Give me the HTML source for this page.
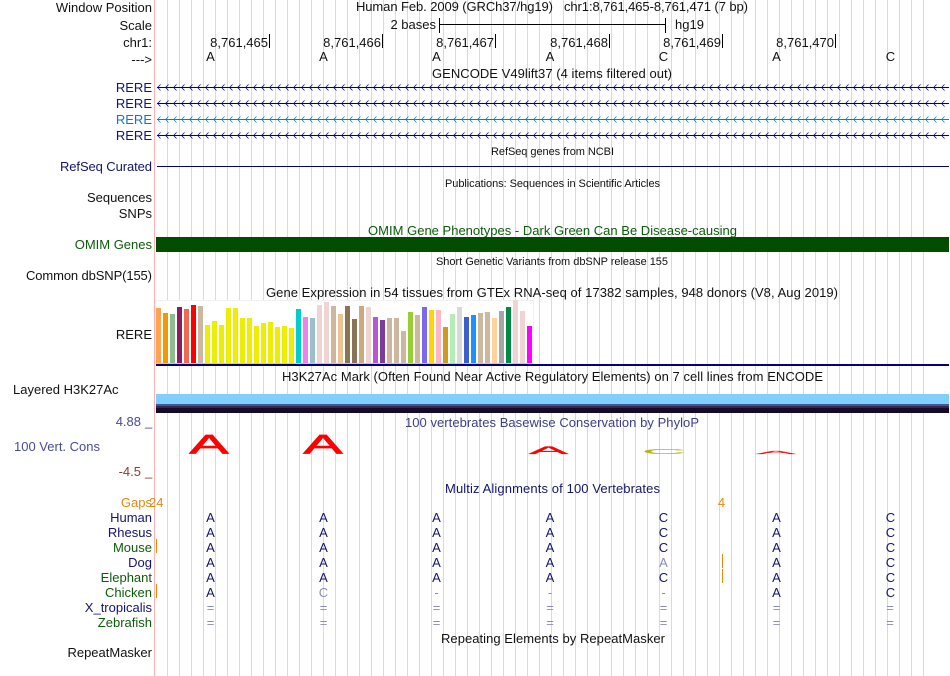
<!DOCTYPE html>
<html><head><meta charset="utf-8"><title>Genome Browser</title>
<style>
html,body{margin:0;padding:0;background:#fff;width:950px;height:676px;overflow:hidden}
svg{display:block;font-family:"Liberation Sans",sans-serif;font-size:13px}
.e{text-anchor:end}.m{text-anchor:middle}.s{font-size:11px}
.n{fill:#14146e}.g{fill:#0b5c0b}.k{fill:#111}.l{fill:#8a8abb}
</style></head><body>
<svg width="950" height="676" viewBox="0 0 950 676" xmlns="http://www.w3.org/2000/svg">
<defs>
<pattern id="ar1" patternUnits="userSpaceOnUse" x="157" y="84" width="8" height="7"><path d="M3.5 .5L.6 3.5L3.5 6.5" fill="none" stroke="#000080" stroke-width=".75"/></pattern>
<pattern id="ar2" patternUnits="userSpaceOnUse" x="157" y="100" width="8" height="7"><path d="M3.5 .5L.6 3.5L3.5 6.5" fill="none" stroke="#000080" stroke-width=".75"/></pattern>
<pattern id="ar3" patternUnits="userSpaceOnUse" x="157" y="116" width="8" height="7"><path d="M3.5 .5L.6 3.5L3.5 6.5" fill="none" stroke="#1378b6" stroke-width=".75"/></pattern>
<pattern id="ar4" patternUnits="userSpaceOnUse" x="157" y="132" width="8" height="7"><path d="M3.5 .5L.6 3.5L3.5 6.5" fill="none" stroke="#000080" stroke-width=".75"/></pattern>
</defs>
<g shape-rendering="crispEdges">
<path fill="none" stroke="#dad6f2" stroke-width="1" d="M167.5 0v676m12-676v676m12-676v676m12-676v676m12-676v676m12-676v676m12-676v676m12-676v676m12-676v676m12-676v676m12-676v676m12-676v676m12-676v676m12-676v676m12-676v676m12-676v676m12-676v676m12-676v676m12-676v676m12-676v676m12-676v676m12-676v676m12-676v676m12-676v676m12-676v676m12-676v676m12-676v676m12-676v676m12-676v676m12-676v676m12-676v676m12-676v676m12-676v676m12-676v676m12-676v676m12-676v676m12-676v676m12-676v676m12-676v676m12-676v676m12-676v676m12-676v676m12-676v676m12-676v676m12-676v676m12-676v676m12-676v676m12-676v676m12-676v676m12-676v676m12-676v676m12-676v676m12-676v676m12-676v676m12-676v676m12-676v676m12-676v676m12-676v676m12-676v676m12-676v676m12-676v676m12-676v676m12-676v676m12-676v676"/>
<rect x="154" y="0" width="1" height="676" fill="#ffb2b2"/>
</g>

<!-- header -->
<g class="k">
<text class="e" x="152" y="12">Window Position</text>
<text class="e" x="152" y="30">Scale</text>
<text class="e" x="152" y="47">chr1:</text>
<text class="e" x="152" y="64">---&gt;</text>
<text x="356" y="11" textLength="197">Human Feb. 2009 (GRCh37/hg19)</text>
<text x="564" y="11" textLength="184">chr1:8,761,465-8,761,471 (7 bp)</text>
<text class="e" x="436" y="29">2 bases</text>
<text x="675" y="29">hg19</text>
<text class="e" x="268" y="47">8,761,465</text>
<text class="e" x="381" y="47">8,761,466</text>
<text class="e" x="494" y="47">8,761,467</text>
<text class="e" x="608" y="47">8,761,468</text>
<text class="e" x="721" y="47">8,761,469</text>
<text class="e" x="834" y="47">8,761,470</text>
<text class="m" x="210.5" y="61">A</text>
<text class="m" x="323.5" y="61">A</text>
<text class="m" x="436.5" y="61">A</text>
<text class="m" x="550" y="61">A</text>
<text class="m" x="663.5" y="61">C</text>
<text class="m" x="776.5" y="61">A</text>
<text class="m" x="890.5" y="61">C</text>
<text x="432" y="78" textLength="240">GENCODE V49lift37 (4 items filtered out)</text>
</g>
<g shape-rendering="crispEdges" fill="#000">
<rect x="439" y="24" width="227" height="1"/>
<rect x="439" y="18" width="1" height="15"/>
<rect x="665" y="18" width="1" height="15"/>
<rect x="269" y="34" width="1" height="14"/>
<rect x="382" y="34" width="1" height="14"/>
<rect x="495" y="34" width="1" height="14"/>
<rect x="609" y="34" width="1" height="14"/>
<rect x="722" y="34" width="1" height="14"/>
<rect x="835" y="34" width="1" height="14"/>
</g>

<!-- RERE -->
<text class="e n" x="152" y="92">RERE</text>
<text class="e n" x="152" y="108">RERE</text>
<text class="e" x="152" y="124" fill="#1378b6">RERE</text>
<text class="e n" x="152" y="140">RERE</text>
<rect x="157" y="84" width="792" height="7" fill="url(#ar1)"/>
<rect x="157" y="100" width="792" height="7" fill="url(#ar2)"/>
<rect x="157" y="116" width="792" height="7" fill="url(#ar3)"/>
<rect x="157" y="132" width="792" height="7" fill="url(#ar4)"/>
<g shape-rendering="crispEdges">
<rect x="157" y="87" width="792" height="1" fill="#000080"/>
<rect x="157" y="103" width="792" height="1" fill="#000080"/>
<rect x="157" y="119" width="792" height="1" fill="#1378b6"/>
<rect x="157" y="135" width="792" height="1" fill="#000080"/>
<rect x="157" y="166" width="792" height="1" fill="#000080"/>
</g>
<text class="s k" x="491" y="155" textLength="123">RefSeq genes from NCBI</text>
<text class="n" x="60" y="171" textLength="92">RefSeq Curated</text>
<text class="s k" x="445" y="187" textLength="215">Publications: Sequences in Scientific Articles</text>
<text class="e k" x="152" y="202">Sequences</text>
<text class="e k" x="152" y="218">SNPs</text>
<text class="g" x="368" y="235" textLength="369">OMIM Gene Phenotypes - Dark Green Can Be Disease-causing</text>
<text class="e g" x="152" y="249">OMIM Genes</text>
<rect x="156" y="237" width="793" height="15" fill="#004d00" shape-rendering="crispEdges"/>
<text class="s k" x="436" y="265" textLength="232">Short Genetic Variants from dbSNP release 155</text>
<text class="k" x="26" y="280" textLength="126">Common dbSNP(155)</text>
<text class="k" x="266" y="297" textLength="572">Gene Expression in 54 tissues from GTEx RNA-seq of 17382 samples, 948 donors (V8, Aug 2019)</text>
<text class="e k" x="152" y="339">RERE</text>

<!-- GTEx bars -->
<g shape-rendering="crispEdges">
<rect x="155" y="300" width="379" height="64" fill="#f1f1f4"/>
<rect x="156" y="301" width="377" height="62" fill="#fff"/>
<rect x="156" y="363" width="377" height="1" fill="#c8c8c8"/>
<rect x="156" y="308" width="5" height="55" fill="#FFA54F"/>
<rect x="163" y="313" width="5" height="50" fill="#EE9A00"/>
<rect x="170" y="314" width="5" height="49" fill="#8FBC8F"/>
<rect x="177" y="307" width="5" height="56" fill="#8B1C62"/>
<rect x="184" y="309" width="5" height="54" fill="#EE6A50"/>
<rect x="191" y="305" width="5" height="58" fill="#FF0000"/>
<rect x="198" y="306" width="5" height="57" fill="#CDB79E"/>
<rect x="205" y="325" width="5" height="38" fill="#EEEE00"/>
<rect x="212" y="321" width="5" height="42" fill="#EEEE00"/>
<rect x="219" y="325" width="5" height="38" fill="#EEEE00"/>
<rect x="226" y="308" width="5" height="55" fill="#EEEE00"/>
<rect x="233" y="308" width="5" height="55" fill="#EEEE00"/>
<rect x="240" y="318" width="5" height="45" fill="#EEEE00"/>
<rect x="247" y="318" width="5" height="45" fill="#EEEE00"/>
<rect x="254" y="326" width="5" height="37" fill="#EEEE00"/>
<rect x="261" y="323" width="5" height="40" fill="#EEEE00"/>
<rect x="268" y="322" width="5" height="41" fill="#EEEE00"/>
<rect x="275" y="327" width="5" height="36" fill="#EEEE00"/>
<rect x="282" y="326" width="5" height="37" fill="#EEEE00"/>
<rect x="289" y="328" width="5" height="35" fill="#EEEE00"/>
<rect x="296" y="309" width="5" height="54" fill="#00CDCD"/>
<rect x="303" y="317" width="5" height="46" fill="#EE82EE"/>
<rect x="310" y="318" width="5" height="45" fill="#9AC0CD"/>
<rect x="317" y="305" width="5" height="58" fill="#EED5D2"/>
<rect x="324" y="302" width="5" height="61" fill="#EED5D2"/>
<rect x="331" y="306" width="5" height="57" fill="#CDB79E"/>
<rect x="338" y="314" width="5" height="49" fill="#EEC591"/>
<rect x="345" y="306" width="5" height="57" fill="#8B7355"/>
<rect x="352" y="319" width="5" height="44" fill="#8B7355"/>
<rect x="359" y="306" width="5" height="57" fill="#CDAA7D"/>
<rect x="366" y="307" width="5" height="56" fill="#EED5D2"/>
<rect x="373" y="317" width="5" height="46" fill="#BA55D3"/>
<rect x="380" y="320" width="5" height="43" fill="#7D3C98"/>
<rect x="387" y="318" width="5" height="45" fill="#CDB79E"/>
<rect x="394" y="318" width="5" height="45" fill="#CDB79E"/>
<rect x="401" y="331" width="5" height="32" fill="#CDB79E"/>
<rect x="408" y="312" width="5" height="51" fill="#9ACD32"/>
<rect x="415" y="315" width="5" height="48" fill="#CDB79E"/>
<rect x="422" y="307" width="5" height="56" fill="#7B68EE"/>
<rect x="429" y="310" width="5" height="53" fill="#FFD700"/>
<rect x="436" y="310" width="5" height="53" fill="#FFB6C1"/>
<rect x="443" y="327" width="5" height="36" fill="#CD9B1D"/>
<rect x="450" y="314" width="5" height="49" fill="#B4EEB4"/>
<rect x="457" y="307" width="5" height="56" fill="#D9D9D9"/>
<rect x="464" y="317" width="5" height="46" fill="#3A5FCD"/>
<rect x="471" y="315" width="5" height="48" fill="#1E90FF"/>
<rect x="478" y="313" width="5" height="50" fill="#CDB79E"/>
<rect x="485" y="312" width="5" height="51" fill="#CDB79E"/>
<rect x="492" y="318" width="5" height="45" fill="#FFD39B"/>
<rect x="499" y="311" width="5" height="52" fill="#A6A6A6"/>
<rect x="506" y="307" width="5" height="56" fill="#008B45"/>
<rect x="513" y="300" width="5" height="63" fill="#EED5D2"/>
<rect x="520" y="311" width="5" height="52" fill="#EED5D2"/>
<rect x="527" y="326" width="5" height="37" fill="#FF00FF"/>
<rect x="156" y="364" width="793" height="2" fill="#000080"/>
</g>

<!-- H3K27Ac -->
<text class="k" x="282" y="381" textLength="541">H3K27Ac Mark (Often Found Near Active Regulatory Elements) on 7 cell lines from ENCODE</text>
<text class="k" x="13" y="394">Layered H3K27Ac</text>
<g shape-rendering="crispEdges">
<rect x="156" y="394" width="793" height="10" fill="#80cfff"/>
<rect x="156" y="404" width="793" height="2" fill="#3c5a9e"/>
<rect x="156" y="406" width="793" height="2" fill="#3a2648"/>
<rect x="156" y="408" width="793" height="5" fill="#150a28"/>
</g>

<!-- PhyloP -->
<text class="e" x="141" y="426" fill="#4a4a9a">4.88</text>
<text x="145" y="426" fill="#4a4a9a">_</text>
<text x="14" y="451" fill="#4a4a9a">100 Vert. Cons</text>
<text class="e" x="141" y="476" fill="#8b3a3a">-4.5</text>
<text x="145" y="476" fill="#8b3a3a">_</text>
<text x="405" y="427" fill="#3d3d8d" textLength="294">100 vertebrates Basewise Conservation by PhyloP</text>
<g font-size="12" text-anchor="middle">
<text transform="translate(209,453.6) scale(4.9,2.25)" fill="#f00" stroke="#f00" stroke-width=".3">A</text>
<text transform="translate(323,453.6) scale(4.9,2.25)" fill="#f00" stroke="#f00" stroke-width=".3">A</text>
<text transform="translate(548.5,453.8) scale(4.9,.95)" fill="#f00" stroke="#f00" stroke-width=".3">A</text>
<text transform="translate(664,453.8) scale(5.1,.58)" fill="#b5b51e" stroke="#b5b51e" stroke-width=".15">C</text>
<text transform="translate(776,453.9) scale(4.9,.36)" fill="#f00" stroke="#f00" stroke-width=".4">A</text>
</g>

<!-- Multiz -->
<text class="n" x="445" y="493" textLength="215">Multiz Alignments of 100 Vertebrates</text>
<text class="e" x="152" y="507" fill="#e8890c">Gaps</text>
<text x="149" y="507" fill="#e8890c">24</text>
<text class="m" x="721.5" y="507" fill="#e8890c">4</text>
<text class="e n" x="152" y="522">Human</text>
<text class="e n" x="152" y="537">Rhesus</text>
<text class="e g" x="152" y="552">Mouse</text>
<text class="e n" x="152" y="567">Dog</text>
<text class="e g" x="152" y="582">Elephant</text>
<text class="e g" x="152" y="597">Chicken</text>
<text class="e n" x="152" y="612">X_tropicalis</text>
<text class="e g" x="152" y="627">Zebrafish</text>
<g shape-rendering="crispEdges" fill="#e8890c">
<rect x="156" y="539" width="1" height="14"/>
<rect x="156" y="584" width="1" height="14"/>
<rect x="722" y="554" width="1" height="14"/>
<rect x="722" y="569" width="1" height="14"/>
</g>
<g class="m n" text-anchor="middle">
<text x="210.5" y="522">A</text><text x="323.5" y="522">A</text><text x="436.5" y="522">A</text><text x="550" y="522">A</text><text x="663.5" y="522">C</text><text x="776.5" y="522">A</text><text x="890.5" y="522">C</text>
<text x="210.5" y="537">A</text><text x="323.5" y="537">A</text><text x="436.5" y="537">A</text><text x="550" y="537">A</text><text x="663.5" y="537">C</text><text x="776.5" y="537">A</text><text x="890.5" y="537">C</text>
<text x="210.5" y="552">A</text><text x="323.5" y="552">A</text><text x="436.5" y="552">A</text><text x="550" y="552">A</text><text x="663.5" y="552">C</text><text x="776.5" y="552">A</text><text x="890.5" y="552">C</text>
<text x="210.5" y="567">A</text><text x="323.5" y="567">A</text><text x="436.5" y="567">A</text><text x="550" y="567">A</text><text class="l" x="663.5" y="567">A</text><text x="776.5" y="567">A</text><text x="890.5" y="567">C</text>
<text x="210.5" y="582">A</text><text x="323.5" y="582">A</text><text x="436.5" y="582">A</text><text x="550" y="582">A</text><text x="663.5" y="582">C</text><text x="776.5" y="582">A</text><text x="890.5" y="582">C</text>
<text x="210.5" y="597">A</text><text class="l" x="323.5" y="597">C</text><text class="l" x="436.5" y="597">-</text><text class="l" x="550" y="597">-</text><text class="l" x="663.5" y="597">-</text><text x="776.5" y="597">A</text><text x="890.5" y="597">C</text>
</g>
<g class="l" text-anchor="middle">
<text x="210.5" y="612">=</text><text x="323.5" y="612">=</text><text x="436.5" y="612">=</text><text x="550" y="612">=</text><text x="663.5" y="612">=</text><text x="776.5" y="612">=</text><text x="890" y="612">=</text>
<text x="210.5" y="627">=</text><text x="323.5" y="627">=</text><text x="436.5" y="627">=</text><text x="550" y="627">=</text><text x="663.5" y="627">=</text><text x="776.5" y="627">=</text><text x="890" y="627">=</text>
</g>
<text class="k" x="441" y="643" textLength="224">Repeating Elements by RepeatMasker</text>
<text class="e k" x="152" y="657">RepeatMasker</text>
</svg>
</body></html>
